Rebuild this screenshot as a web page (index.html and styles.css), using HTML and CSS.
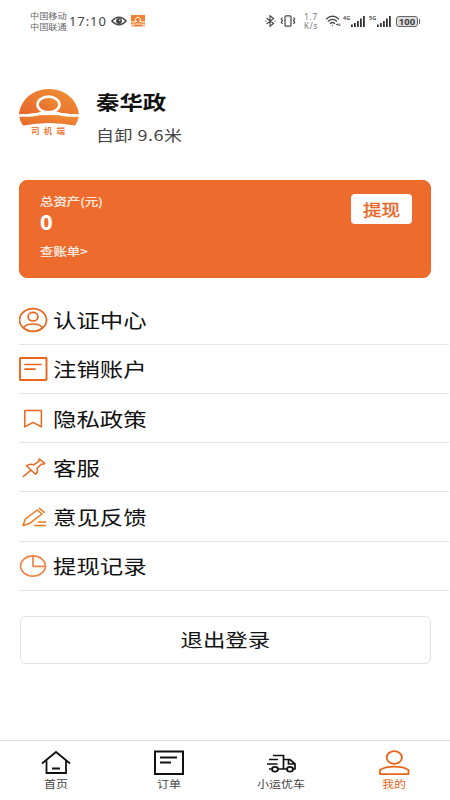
FILE: index.html
```html
<!DOCTYPE html>
<html lang="zh-CN">
<head>
<meta charset="utf-8">
<title>我的</title>
<link rel="stylesheet" href="styles.css">
</head>
<body>
<div class="app">
  <header class="status">
    <div class="carriers"><span class="wide">中国移动</span><span class="wide">中国联通</span></div>
    <span class="clock">17:10</span>
    <svg class="eye" width="16" height="10" viewBox="0 0 16 10" fill="none" stroke="#444" stroke-width="1.3"><path d="M.8 5Q8-2.6 15.2 5Q8 12.600 .8 5Z"/><circle cx="8" cy="5" r="2.300" fill="#444"/><circle cx="8.700" cy="4.200" r=".8" fill="#fff" stroke="none"/></svg>
    <svg class="mini" width="14" height="12" viewBox="0 0 14 12"><path fill="#f28232" d="M0 0h14v12H0z"/><path d="M0 7Q3 7 5.500 6.500A2.500 2.300 0 1 1 8.500 6.500Q11 7 14 7" fill="none" stroke="#fff"/><path d="M0 9Q7 7.500 14 9V12H0Z" fill="#f9c9a4"/><path d="M3 10.500h8" stroke="#ee7626" stroke-width="1.200"/></svg>
    <svg class="bt" width="11" height="12" viewBox="0 0 11 12" fill="none" stroke="#444" stroke-width="1.100"><path d="M1.500 3L8.500 8.500L5 11.300V.7L8.500 3.500L1.500 9M9.800 6h.8M.2 6h1.300"/></svg>
    <svg class="vib" width="16" height="12" viewBox="0 0 16 12" fill="none" stroke="#444" stroke-width="1.200"><rect x="5" y=".8" width="6" height="10.400" rx="1"/><path d="M2.500 2.500L1.300 4L2.500 5.500L1.300 7.200L2.500 9M13.500 2.500L14.700 4L13.500 5.500L14.700 7.200L13.500 9"/></svg>
    <div class="speed"><span>1.7</span><span>K/s</span></div>
    <svg class="wifi" width="16" height="12" viewBox="0 0 16 12" fill="none" stroke="#444" stroke-width="1.200"><path d="M1 4.200Q7.500-1.800 14 4.200M3 6.500Q7.500 2.300 12 6.500M5 8.700Q7.500 6.300 10 8.700"/><circle cx="7.500" cy="10.600" r=".6" fill="#444" stroke="none"/><path d="M11 9.500h1.800M13 8.500v2.500M14.800 8.500v2.500" stroke-width=".9"/></svg>
    <div class="signal"><span class="gen">4G</span><svg width="14" height="11" viewBox="0 0 14 11" fill="#333"><path d="M0 8.500h1.800V11H0zM3 7h1.800v4H3zM6 5h1.800v6H6zM9 2.500h1.800V11H9zM12 0h1.800v11H12z"/></svg></div>
    <div class="signal second"><span class="gen">5G</span><svg width="14" height="11" viewBox="0 0 14 11" fill="#333"><path d="M0 8.500h1.800V11H0zM3 7h1.800v4H3zM6 5h1.800v6H6zM9 2.500h1.800V11H9zM12 0h1.800v11H12z"/></svg></div>
    <div class="battery"><span>100</span></div>
  </header>

  <section class="profile">
    <svg class="logo" width="62" height="47" viewBox="0 0 62 47">
      <defs><linearGradient id="sun" x1="0" x2="1" y1="1" y2="0"><stop offset="0" stop-color="#e7652b"/><stop offset="1" stop-color="#ef9336"/></linearGradient></defs>
      <path fill="url(#sun)" d="M1 26C2 12 14 0 31 0S60 12 61 26Q31 21 1 26Z"/>
      <path fill="url(#sun)" d="M1 27Q31 25 61 27Q60 33 57 36.500Q31 31.500 5 36.500Q2 33 1 27Z"/>
      <path d="M0 26.500C7 26.200 14 26.800 19 25.200Q22 24 25.500 23.200Q31 21.500 36.500 23.200Q40 24 43 25.200C48 26.800 55 26.200 62 26.500" fill="none" stroke="#fff" stroke-width="2.700"/>
      <ellipse cx="30.500" cy="15.500" rx="11" ry="7.800" fill="url(#sun)" stroke="#fff" stroke-width="2.700"/>
      <text x="13" y="45" class="logo-text">司机端</text>
    </svg>
    <div class="who">
      <h1 class="wide name">秦华政</h1>
      <p class="wide truck">自卸 9.6米</p>
    </div>
  </section>

  <section class="card">
    <div class="assets">
      <span class="wide label">总资产(元)</span>
      <strong class="wide amount">0</strong>
      <span class="wide label bill">查账单&gt;</span>
    </div>
    <button class="withdraw"><span class="wide">提现</span></button>
  </section>

  <ul class="menu">
    <li><svg width="30" height="26" viewBox="0 0 30 26"><ellipse cx="14" cy="13" rx="13.500" ry="11.300"/><ellipse cx="14" cy="9.700" rx="4.900" ry="4.300"/><path d="M4.700 20.500Q7 17 14 17T23.300 20.500"/></svg><span class="wide">认证中心</span></li>
    <li><svg width="30" height="26" viewBox="0 0 30 26"><rect x="1" y="2" width="26.500" height="22" rx=".5" stroke-width="1.900"/><path d="M6 8.500h16M6 13.200h10"/></svg><span class="wide">注销账户</span></li>
    <li><svg width="30" height="26" viewBox="0 0 30 26"><path d="M5.800 4.500h16.600V20.800L14.100 16.300L5.800 20.800Z" stroke-width="1.500"/></svg><span class="wide">隐私政策</span></li>
    <li><svg width="30" height="26" viewBox="0 0 30 26"><path d="M4.300 21.500L12 15.200M7.500 10.700Q12 8.300 14.500 9.800L20 6.300Q19.200 4.800 20.500 4L25.700 8.400Q24.500 9.600 22.500 8.900L18 13.500Q19.500 17 16.500 19.200Z" stroke-width="1.500"/></svg><span class="wide">客服</span></li>
    <li class="amber"><svg width="30" height="26" viewBox="0 0 30 26"><path d="M4 21.500L6.200 15.200L18.200 6L23 10L11 19.200ZM20.300 4.200L25.200 8.300M19.500 18H26.500M15.500 21.500H26.500" stroke-width="1.500"/></svg><span class="wide">意见反馈</span></li>
    <li class="soft"><svg width="30" height="26" viewBox="0 0 30 26"><ellipse cx="14" cy="13" rx="12.400" ry="10.200"/><path d="M14 3V13.300H26.200"/></svg><span class="wide">提现记录</span></li>
  </ul>

  <button class="logout"><span class="wide">退出登录</span></button>

  <nav class="tabs">
    <a><svg width="32" height="26" viewBox="0 0 32 26"><path d="M2 13.500L16 2L30 13.500M6.500 10.500V23H26V10.500M12 18.500h8"/></svg><span class="wide">首页</span></a>
    <a><svg width="32" height="26" viewBox="0 0 32 26"><rect x="2" y="1.500" width="28" height="22.500" stroke-width="2"/><path d="M7 7.500h17M7 12.500h11"/></svg><span class="wide">订单</span></a>
    <a><svg width="32" height="26" viewBox="0 0 32 26"><path d="M8 5.500H18.500V19H13.500M4 9.500H13M2 14H12.500M4 19H6.500M18.500 9.500H25L30 14V19H28M18.500 19H22M23.500 10V14H29" stroke-width="1.700"/><ellipse cx="10" cy="19.200" rx="3" ry="2.400"/><ellipse cx="25" cy="19.200" rx="3" ry="2.400"/></svg><span class="wide">小运优车</span></a>
    <a class="on"><svg width="32" height="26" viewBox="0 0 32 26"><ellipse cx="16.300" cy="7.500" rx="7.600" ry="6.300"/><path d="M2 24.200V20Q7 16.700 16.300 16.700T30.500 20V24.200Z"/></svg><span class="wide">我的</span></a>
  </nav>
</div>
</body>
</html>
```

FILE: styles.css
```css
* { box-sizing: border-box; margin: 0; padding: 0; }

body {
  width: 450px;
  height: 800px;
  overflow: hidden;
  background: #fff;
  color: #111;
  font-family: "Noto Sans CJK SC", "Noto Sans", sans-serif;
}

button { border: 0; background: none; font: inherit; color: inherit; }

.app { display: flex; flex-direction: column; height: 800px; }

/* Glyphs are drawn wider than tall throughout the app. */
.wide {
  display: block;
  width: max-content;
  white-space: nowrap;
  transform: scaleX(1.2);
  transform-origin: left center;
}

/* Status bar */
.status {
  display: flex;
  align-items: center;
  height: 42px;
  padding-left: 30px;
  color: #555;
}
.status svg { flex: none; }
.carriers { width: 39px; font-size: 8.400px; line-height: 11px; color: #666; }
.carriers .wide { transform: scaleX(1.090); }
.clock { width: 42px; font-family: "Noto Sans", sans-serif; font-size: 13px; letter-spacing: .9px; line-height: 20px; color: #444; }
.mini { margin-left: 4px; }
.bt { margin-left: 120px; }
.vib { margin-left: 4px; }
.speed {
  display: flex;
  flex-direction: column;
  align-items: center;
  width: 16px;
  margin-left: 7px;
  font-family: "Noto Sans", sans-serif;
  font-size: 8px;
  line-height: 9.500px;
  letter-spacing: .7px;
  color: #777;
}
.wifi { margin-left: 6px; }
.signal { display: flex; align-items: flex-start; width: 22px; margin-left: 2px; }
.signal.second { margin-left: 4px; }
.gen { width: 8px; font-family: "Noto Sans", sans-serif; font-size: 5.500px; font-weight: 700; line-height: 5px; }
.battery {
  display: flex;
  align-items: center;
  justify-content: center;
  position: relative;
  width: 22px;
  height: 11px;
  margin-left: 5px;
  border: 1px solid #666;
  border-radius: 3px;
  background: #ddd;
  font-family: "Noto Sans", sans-serif;
  font-size: 9.500px;
  font-weight: 700;
  line-height: 9px;
  color: #444;
}
.battery::after { content: ""; position: absolute; right: -3px; top: 2px; width: 1px; height: 5px; background: #666; }

/* Profile */
.profile { display: flex; height: 138px; padding: 47px 0 0 18px; }
.logo { flex: none; }
.logo-text { font-size: 8.500px; font-weight: 700; letter-spacing: 4.200px; fill: #ea7c3c; }
.who { margin-left: 15.500px; }
.name { font-size: 19.500px; font-weight: 700; line-height: 26px; }
.truck { margin-top: 9px; font-size: 15px; line-height: 22px; letter-spacing: .4px; color: #444; }

/* Asset card */
.card {
  display: flex;
  justify-content: space-between;
  align-items: flex-start;
  width: 412px;
  height: 98px;
  margin-left: 19px;
  padding: 14px 18.500px 0 19.500px;
  border: 1px solid #e76a22;
  border-radius: 8px;
  background: #ed6c2d;
  color: #fff;
}
.assets { margin-top: -2px; }
.label { font-size: 11.200px; line-height: 16px; color: #fff5ee; -webkit-text-stroke: .2px #fff5ee; }
.amount { font-family: "Noto Sans", sans-serif; font-size: 20.500px; line-height: 26px; transform: scaleX(1.08); }
.bill { margin-top: 8px; }
.withdraw {
  width: 61px;
  height: 30px;
  margin-top: -1px;
  padding-left: 12px;
  border-radius: 4px;
  background: #fff;
  color: #e8661f;
  font-size: 15.500px;
  line-height: 28px;
  -webkit-text-stroke: .4px #e8661f;
}

/* Menu */
.menu { margin: 17.700px 0 0 19px; width: 430px; list-style: none; }
.menu li {
  display: flex;
  align-items: center;
  height: 49.200px;
  padding-top: 1px;
  border-bottom: 1px solid #e6e6e6;
  font-size: 19.500px;
  line-height: 28px;
}
.menu svg { flex: none; margin-right: 4px; fill: none; stroke: #e8661c; stroke-width: 1.700; stroke-linejoin: round; stroke-linecap: round; }
.menu .amber svg { stroke: #ea7a1e; }
.menu .soft svg { stroke: #ee8448; }

/* Sign out */
.logout {
  width: 411px;
  height: 48px;
  margin: 25.500px 0 0 19.500px;
  padding-bottom: 3px;
  border: 1px solid #e2e2e2;
  border-radius: 6px;
  font-size: 18.700px;
  line-height: 42px;
}
.logout .wide, .tabs .wide { margin: 0 auto; transform-origin: center; }

/* Bottom tabs */
.tabs { display: flex; height: 60px; margin-top: auto; padding-top: 9px; border-top: 1px solid #ddd; }
.tabs a { flex: 1; display: flex; flex-direction: column; align-items: center; font-size: 10px; line-height: 16px; color: #444; }
.tabs svg { fill: none; stroke: #111; stroke-width: 1.800; }
.tabs .on { color: #e8661c; }
.tabs .on svg { stroke: #e8661c; }
```
